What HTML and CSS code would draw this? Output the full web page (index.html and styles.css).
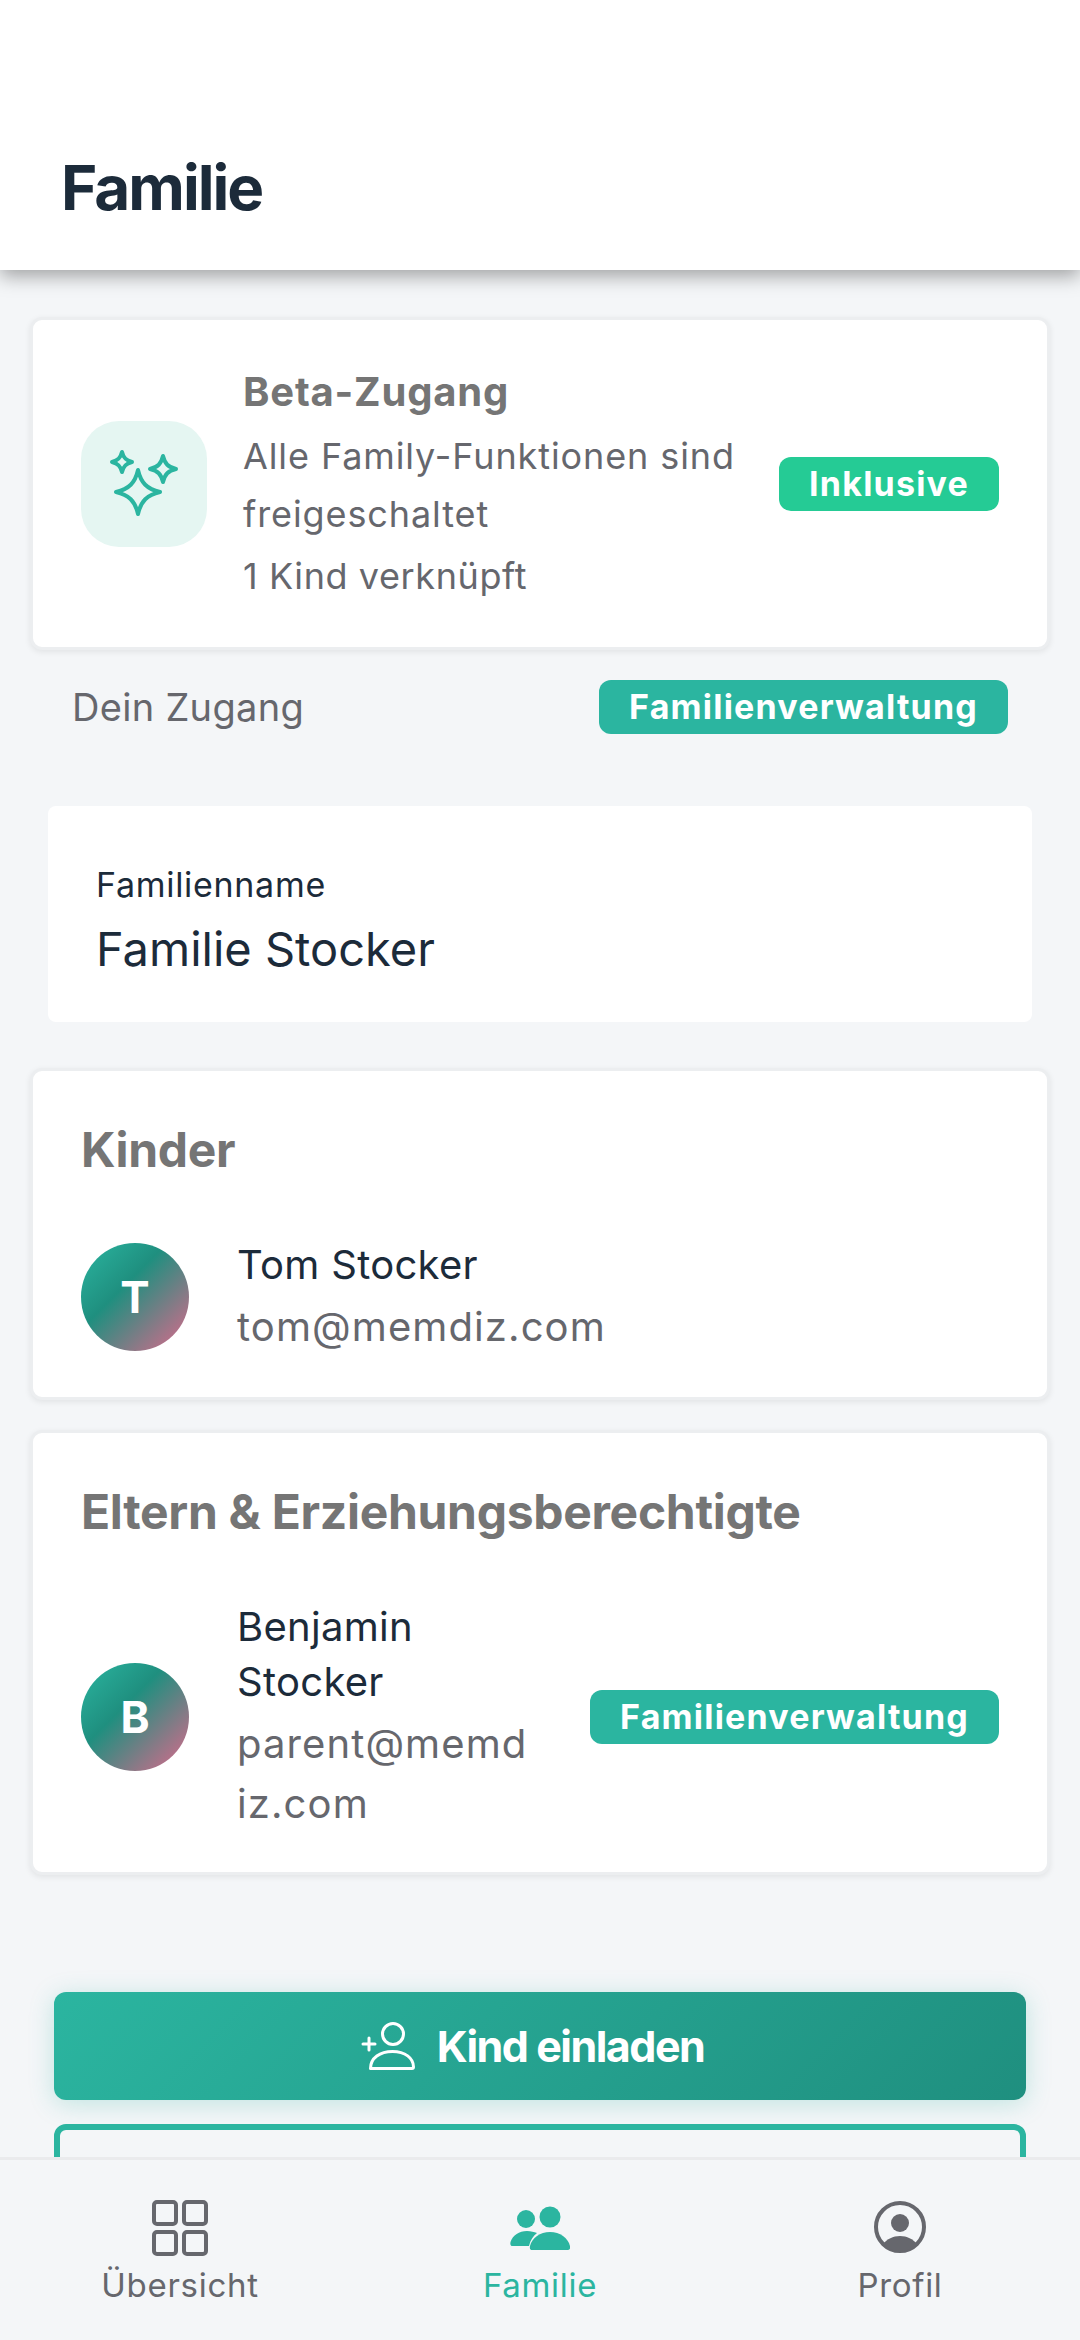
FILE: index.html
```html
<!DOCTYPE html>
<html lang="de">
<head>
<meta charset="utf-8">
<title>Familie</title>
<link rel="stylesheet" href="styles.css">
</head>
<body>
<div class="app">
  <header class="topbar"><h1 class="page-title">Familie</h1></header>
  <main class="content">
    <section class="card beta">
      <div class="beta-icon">
        <svg width="126" height="126" viewBox="0 0 126 126" fill="none" stroke="#2bb5a0" stroke-width="4" stroke-linejoin="round">
          <path d="M57 49C60 62 66 68 79 71C66 74 60 80 57 93C54 80 48 74 35 71C48 68 54 62 57 49Z"/>
          <path d="M82 35C84 43 87 46 95 48C87 50 84 53 82 61C80 53 77 50 69 48C77 46 80 43 82 35Z"/>
          <path d="M41 31C42.500 37 45 39.500 51 41C45 42.500 42.500 45 41 51C39.500 45 37 42.500 31 41C37 39.500 39.500 37 41 31Z"/>
        </svg>
      </div>
      <div class="beta-text">
        <h2 class="beta-title">Beta-Zugang</h2>
        <p class="beta-desc">Alle Family-Funktionen sind freigeschaltet</p>
        <p class="beta-sub">1 Kind verknüpft</p>
      </div>
      <span class="badge badge-green">Inklusive</span>
    </section>

    <div class="access-row">
      <span class="access-label">Dein Zugang</span>
      <span class="badge badge-teal">Familienverwaltung</span>
    </div>

    <section class="family-name">
      <div class="family-label">Familienname</div>
      <div class="family-value">Familie Stocker</div>
    </section>

    <section class="card members members-kids">
      <h2 class="section-title">Kinder</h2>
      <div class="member">
        <div class="avatar">T</div>
        <div class="member-text">
          <div class="member-name">Tom Stocker</div>
          <div class="member-mail">tom@memdiz.com</div>
        </div>
      </div>
    </section>

    <section class="card members members-parents">
      <h2 class="section-title">Eltern &amp; Erziehungsberechtigte</h2>
      <div class="member">
        <div class="avatar">B</div>
        <div class="member-text narrow">
          <div class="member-name">Benjamin Stocker</div>
          <div class="member-mail">parent@memd<wbr>iz.com</div>
        </div>
        <span class="badge badge-teal">Familienverwaltung</span>
      </div>
    </section>

    <div class="actions">
      <button class="btn-primary">
        <svg width="56" height="56" viewBox="0 0 56 56" fill="none" stroke="#fff" stroke-width="3" stroke-linecap="round" stroke-linejoin="round">
          <circle cx="33" cy="16" r="10.500"/>
          <path d="M10.500 50.500C10.500 40 20 33.500 32.500 33.500C45 33.500 53.500 40 53.500 49C53.500 50 53 50.500 52 50.500Z"/>
          <path d="M9 20V32M3 26H15"/>
        </svg>
        <span>Kind einladen</span>
      </button>
      <div class="btn-outline"></div>
    </div>
  </main>

  <nav class="tabbar">
    <div class="tab">
      <svg width="60" height="60" viewBox="0 0 60 60" fill="none" stroke="#66676d" stroke-width="4">
        <rect x="4" y="5" width="22" height="22" rx="3"/>
        <rect x="34" y="5" width="22" height="22" rx="3"/>
        <rect x="4" y="35" width="22" height="22" rx="3"/>
        <rect x="34" y="35" width="22" height="22" rx="3"/>
      </svg>
      <span>Übersicht</span>
    </div>
    <div class="tab tab-active">
      <svg width="60" height="60" viewBox="0 0 60 60" fill="#2bb5a0">
        <circle cx="40" cy="20" r="10.500"/>
        <circle cx="16" cy="22" r="9"/>
        <path d="M2 49C0.500 49 0 47 0.500 45C3 38 9 34 17 34C21 34 24 35 27 36C23 39 20.500 43 19 49Z"/>
        <path d="M22 53C20 53 19.500 51 20 49C22 41 30 35 40 35C50 35 58 41 60 49C60.500 51 60 53 58 53Z"/>
      </svg>
      <span>Familie</span>
    </div>
    <div class="tab">
      <svg width="60" height="60" viewBox="0 0 60 60">
        <circle cx="30" cy="30" r="24" fill="none" stroke="#66676d" stroke-width="4"/>
        <circle cx="30" cy="26" r="9" fill="#66676d"/>
        <path d="M13 47C17 42 23 39 30 39C37 39 43 42 47 47C43 52 37 54 30 54C23 54 17 52 13 47Z" fill="#66676d"/>
      </svg>
      <span>Profil</span>
    </div>
  </nav>
</div>
</body>
</html>
```

FILE: styles.css
```css
* { box-sizing: border-box; }
html, body { margin: 0; padding: 0; }
body { background: #f4f6f8; font-family: "Inter", "Liberation Sans", sans-serif; }
h1, h2, p { margin: 0; }

.app { width: 1080px; height: 2340px; display: flex; flex-direction: column; overflow: hidden; position: relative; }

.topbar {
  height: 270px; flex: none; background: #fff; padding: 150px 61px 0;
  box-shadow: 0 6px 18px rgba(0,0,0,.35); position: relative; z-index: 2;
}
.page-title { font-size: 62px; line-height: 76px; font-weight: 700; color: #1c2b3a; letter-spacing: -2px; }

.content { flex: 1; min-height: 0; overflow: hidden; padding: 47px 30px 0; display: flex; flex-direction: column; }

.card {
  background: #fff; border-radius: 12px; border: 3px solid #eceef0;
  box-shadow: 0 2px 6px rgba(0,0,0,.08); flex: none;
}

.beta { height: 333px; display: flex; align-items: center; padding: 0 48px; }
.beta-icon { width: 126px; height: 126px; border-radius: 38px; background: #e5f6f2; flex: none; margin-right: 36px; }
.beta-icon svg { display: block; }
.beta-text { flex: 1; min-width: 0; color: #66676d; }
.beta-title { font-size: 40px; line-height: 58px; font-weight: 700; color: #757575; margin-bottom: 6px; letter-spacing: .8px; }
.beta-desc { font-size: 36px; line-height: 58px; width: 510px; letter-spacing: .9px; }
.beta-sub { font-size: 36px; line-height: 58px; margin-top: 4px; letter-spacing: .6px; }

.badge { flex: none; color: #fff; font-weight: 700; font-size: 34px; line-height: 40px; border-radius: 12px; text-align: center; letter-spacing: 1.2px; padding: 7px 30px; }
.badge-green { background: #25cb95; }
.badge-teal { background: #2bb5a0; }

.access-row { display: flex; justify-content: space-between; align-items: center; height: 54px; margin-top: 30px; padding: 0 42px 0 42px; flex: none; }
.access-label { font-size: 38px; color: #66676d; letter-spacing: .3px; }

.family-name { margin: 72px 18px 0; height: 216px; flex: none; background: #fff; border-radius: 8px; padding: 56px 48px 0; color: #1c2b3a; }
.family-label { font-size: 34px; line-height: 46px; letter-spacing: .7px; }
.family-value { font-size: 47px; line-height: 66px; margin-top: 8px; }

.members { padding: 48px 48px 0; margin-top: 46px; }
.members-kids { height: 332px; }
.members-parents { height: 445px; margin-top: 30px; }
.section-title { font-size: 48px; line-height: 62px; font-weight: 700; color: #757575; letter-spacing: -.3px; margin-bottom: 56px; }

.member { display: flex; align-items: center; }
.avatar {
  width: 108px; height: 108px; border-radius: 50%; flex: none; color: #fff; font-weight: 700; font-size: 44px;
  display: flex; align-items: center; justify-content: center; margin-right: 48px;
  background: linear-gradient(135deg, #2bb5a0 0%, #1f8f7f 40%, #e0688c 100%);
}
.member-text { flex: 1; min-width: 0; }
.member-text.narrow { padding-right: 32px; }
.member-name { font-size: 40px; line-height: 55px; color: #1c2b3a; letter-spacing: .3px; }
.member-mail { font-size: 40px; line-height: 60px; color: #66676d; margin-top: 5px; letter-spacing: 1.1px; }

.actions { margin-top: 117px; padding: 0 24px; display: flex; flex-direction: column; gap: 24px; flex: none; }
.btn-primary {
  height: 108px; border: 0; border-radius: 12px; color: #fff; font: 700 43px "Inter", sans-serif; letter-spacing: -1.5px;
  display: flex; align-items: center; justify-content: center; gap: 21px; padding: 0 16px 0 0;
  background: linear-gradient(135deg, #2bb5a0 0%, #1f8f7f 100%);
  box-shadow: 0 4px 24px rgba(43,181,160,.25);
}
.btn-outline { height: 108px; flex: none; border: 6px solid #2bb5a0; border-radius: 12px; }

.tabbar {
  height: 183px; position: absolute; left: 0; right: 0; bottom: 0; background: #f4f6f8; border-top: 3px solid #eaebed;
  display: grid; grid-template-columns: 1fr 1fr 1fr; padding-top: 37px; z-index: 3;
}
.tab { display: flex; flex-direction: column; align-items: center; font-size: 33px; line-height: 40px; color: #66676d; gap: 8px; letter-spacing: .7px; }
.tab svg { display: block; }
.tab-active { color: #2bb5a0; }
```
